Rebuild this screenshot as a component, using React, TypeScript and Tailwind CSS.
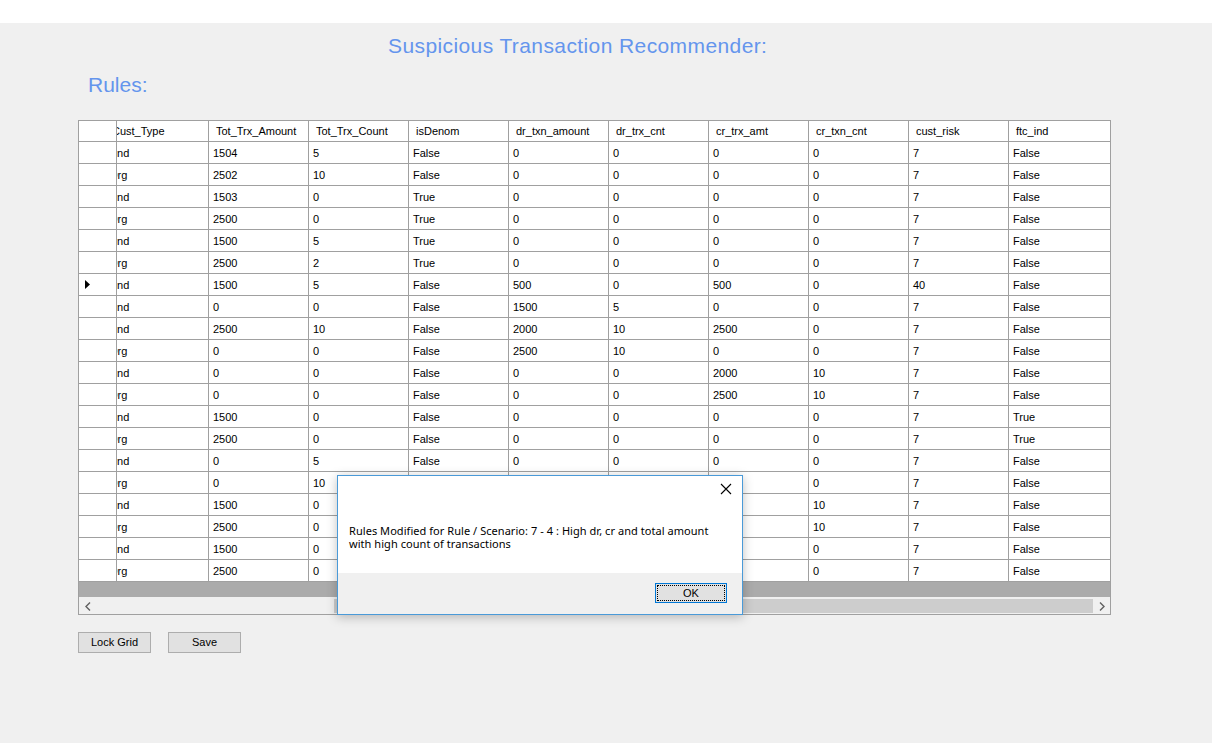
import React from 'react'

const cols = ['Tot_Trx_Amount', 'Tot_Trx_Count', 'isDenom', 'dr_txn_amount', 'dr_trx_cnt', 'cr_trx_amt', 'cr_txn_cnt', 'cust_risk', 'ftc_ind']

// Cust_Type, then the nine columns above
const rows: string[][] = [
  ['Ind', '1504', '5', 'False', '0', '0', '0', '0', '7', 'False'],
  ['Org', '2502', '10', 'False', '0', '0', '0', '0', '7', 'False'],
  ['Ind', '1503', '0', 'True', '0', '0', '0', '0', '7', 'False'],
  ['Org', '2500', '0', 'True', '0', '0', '0', '0', '7', 'False'],
  ['Ind', '1500', '5', 'True', '0', '0', '0', '0', '7', 'False'],
  ['Org', '2500', '2', 'True', '0', '0', '0', '0', '7', 'False'],
  ['Ind', '1500', '5', 'False', '500', '0', '500', '0', '40', 'False'],
  ['Ind', '0', '0', 'False', '1500', '5', '0', '0', '7', 'False'],
  ['Ind', '2500', '10', 'False', '2000', '10', '2500', '0', '7', 'False'],
  ['Org', '0', '0', 'False', '2500', '10', '0', '0', '7', 'False'],
  ['Ind', '0', '0', 'False', '0', '0', '2000', '10', '7', 'False'],
  ['Org', '0', '0', 'False', '0', '0', '2500', '10', '7', 'False'],
  ['Ind', '1500', '0', 'False', '0', '0', '0', '0', '7', 'True'],
  ['Org', '2500', '0', 'False', '0', '0', '0', '0', '7', 'True'],
  ['Ind', '0', '5', 'False', '0', '0', '0', '0', '7', 'False'],
  ['Org', '0', '10', 'False', '0', '0', '0', '0', '7', 'False'],
  ['Ind', '1500', '0', 'False', '1500', '10', '0', '10', '7', 'False'],
  ['Org', '2500', '0', 'False', '2500', '10', '0', '10', '7', 'False'],
  ['Ind', '1500', '0', 'False', '0', '0', '0', '0', '7', 'False'],
  ['Org', '2500', '0', 'False', '0', '0', '0', '0', '7', 'False'],
]

const font = { fontFamily: '"Liberation Sans", Arial, sans-serif' }

function Grid() {
  return (
    <div className="w-[1033px] border border-[#a0a0a0] bg-white text-[11px] text-black">
      {/* header */}
      <div className="flex h-[21px] border-b border-[#a0a0a0]">
        <div className="w-[38px] shrink-0 border-r border-[#a0a0a0]" />
        <div className="w-[92px] shrink-0 overflow-hidden border-r border-[#a0a0a0] flex items-center">
          <span className="-ml-[5px] whitespace-nowrap">Cust_Type</span>
        </div>
        {cols.map((c, i) => (
          <div key={c} className={`w-[100px] shrink-0 flex items-center pl-[7px] ${i < cols.length - 1 ? 'border-r border-[#a0a0a0]' : ''}`}>
            {c}
          </div>
        ))}
      </div>

      {/* rows */}
      {rows.map((r, ri) => (
        <div key={ri} className="flex h-[22px] border-b border-[#a0a0a0]">
          <div className="w-[38px] shrink-0 border-r border-[#a0a0a0] flex items-center pl-[6px]">
            {ri === 6 && (
              <svg width="5" height="9" viewBox="0 0 5 9"><path d="M0 0 L5 4.5 L0 9 Z" fill="#000" /></svg>
            )}
          </div>
          <div className="w-[92px] shrink-0 overflow-hidden border-r border-[#a0a0a0] flex items-center pt-[1px]">
            <span className={`whitespace-nowrap ${r[0] === 'Org' ? '-ml-[8px]' : '-ml-[3px]'}`}>{r[0]}</span>
          </div>
          {r.slice(1).map((v, i) => (
            <div key={i} className={`w-[100px] shrink-0 flex items-center pl-[4px] pt-[1px] ${i < cols.length - 1 ? 'border-r border-[#a0a0a0]' : ''}`}>
              {v}
            </div>
          ))}
        </div>
      ))}

      {/* empty area */}
      <div className="h-[15px] bg-[#ababab]" />

      {/* horizontal scrollbar */}
      <div className="flex h-[17px] bg-[#f0f0f0] border-t border-[#f0f0f0]">
        <div className="w-[17px] flex items-center justify-center">
          <svg width="6" height="9" viewBox="0 0 6 9"><path d="M5 0.5 L1 4.5 L5 8.5" fill="none" stroke="#606060" strokeWidth="1.4" /></svg>
        </div>
        <div className="flex-1 flex items-stretch py-[1px]">
          <div className="w-[238px]" />
          <div className="flex-1 bg-[#cdcdcd]" />
        </div>
        <div className="w-[17px] flex items-center justify-center">
          <svg width="6" height="9" viewBox="0 0 6 9"><path d="M1 0.5 L5 4.5 L1 8.5" fill="none" stroke="#606060" strokeWidth="1.4" /></svg>
        </div>
      </div>
    </div>
  )
}

function MessageBox() {
  return (
    <div className="absolute left-[337px] top-[475px] w-[406px] h-[140px] border border-[#4a9ad8] bg-white shadow-[0_2px_10px_rgba(0,0,0,0.25)] flex flex-col" style={{ fontFamily: '"Noto Sans", "Open Sans", sans-serif' }}>
      <div className="h-[97px] relative">
        <div className="absolute right-[10px] top-[7px]">
          <svg width="12" height="12" viewBox="0 0 12 12"><path d="M1 1 L11 11 M11 1 L1 11" stroke="#000" strokeWidth="1.1" /></svg>
        </div>
        <div className="pl-[11px] pt-[48px] text-[11px] leading-[13px] text-black tracking-[0.05px]">
          <div>Rules Modified for Rule / Scenario: 7 - 4 : High dr, cr and total amount</div>
          <div>with high count of transactions</div>
        </div>
      </div>
      <div className="flex-1 bg-[#f0f0f0] flex justify-end items-start pt-[10px] pr-[15px]">
        <div className="w-[72px] h-[20px] border border-[#0078d7] bg-[#e1e1e1] p-[1px]">
          <div className="h-full border border-dotted border-black flex items-center justify-center text-[11px]" style={font}>OK</div>
        </div>
      </div>
    </div>
  )
}

export default function App() {
  return (
    <div className="w-[1212px] h-[743px] bg-white relative overflow-hidden" style={font}>
      <div className="h-[23px]" />
      <div className="h-[720px] bg-[#f0f0f0] flex flex-col">
        <div className="h-[24px] mt-[11px] text-[21px] tracking-[0.4px] text-[#6495ed] pl-[388px] leading-[24px]">
          Suspicious Transaction Recommender:
        </div>
        <div className="h-[24px] mt-[15px] text-[21px] text-[#6495ed] pl-[88px] leading-[24px]">Rules:</div>
        <div className="pl-[78px] mt-[23px]">
          <Grid />
        </div>
        <div className="flex gap-[17px] pl-[78px] mt-[17px]">
          <button className="w-[73px] h-[21px] border border-[#adadad] bg-[#e1e1e1] text-[11px]">Lock Grid</button>
          <button className="w-[73px] h-[21px] border border-[#adadad] bg-[#e1e1e1] text-[11px]">Save</button>
        </div>
      </div>
      <MessageBox />
    </div>
  )
}
